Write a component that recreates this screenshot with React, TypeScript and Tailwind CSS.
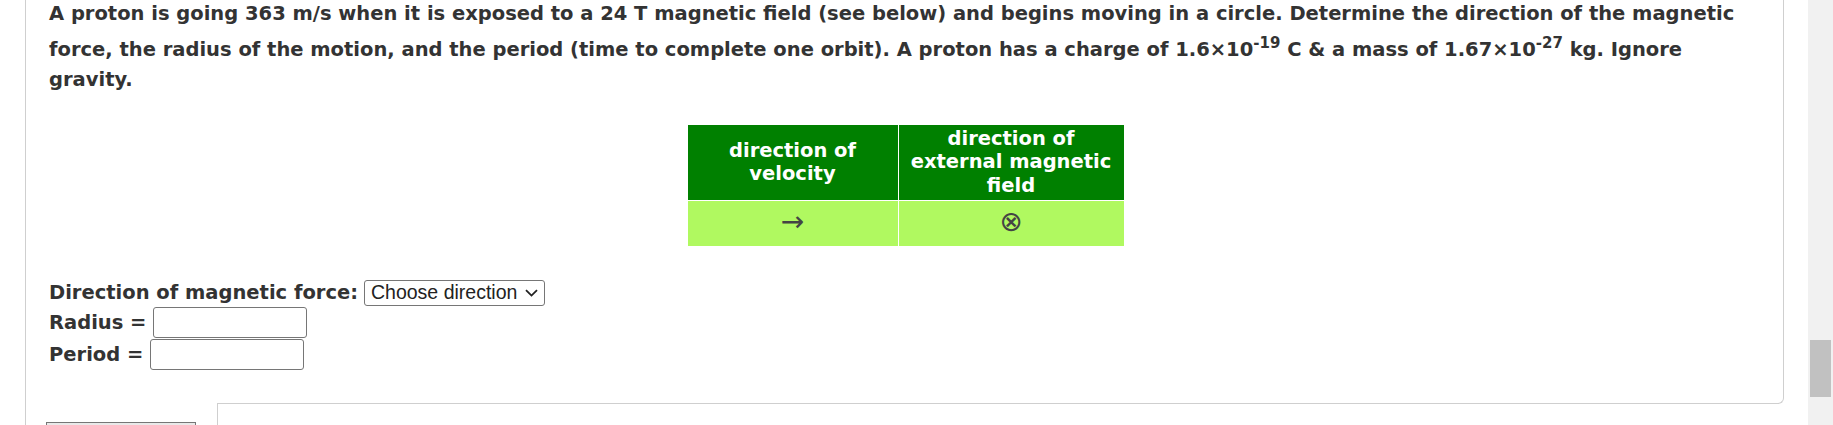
import React from "react";

function Sup({ children }: { children: React.ReactNode }) {
  return <span className="align-super text-[15px] leading-[28px]">{children}</span>;
}

function FieldTable() {
  return (
    <div className="mx-auto mt-[30px] grid w-[436px] grid-cols-[210px_225px] gap-px">
      <div className="flex h-[75px] items-center justify-center bg-[#008000] px-2 text-center text-[19.5px] font-bold leading-[23.5px] text-white">
        direction of velocity
      </div>
      <div className="flex h-[75px] items-center justify-center bg-[#008000] px-2 text-center text-[19.5px] font-bold leading-[23.5px] text-white">
        direction of external magnetic field
      </div>
      <div className="flex h-[45px] items-center justify-center bg-[#b0f960] pb-[2px] font-['DejaVu_Sans',sans-serif] text-[28px] leading-none text-[#444]">
        →
      </div>
      <div className="flex h-[45px] items-center justify-center bg-[#b0f960] pb-[2px] font-['DejaVu_Sans',sans-serif] text-[28px] leading-none text-[#444]">
        ⊗
      </div>
    </div>
  );
}

function AnswerForm() {
  return (
    <div className="mt-[33px] flex flex-col text-[19.5px] font-bold">
      <div className="flex h-[28px] items-center gap-[6px]">
        <span>Direction of magnetic force:</span>
        <div className="flex h-[26px] w-[181px] items-center justify-between rounded-[3px] border border-[#767676] px-[6px] font-['Liberation_Sans',Arial,sans-serif] text-[19.5px] font-normal text-[#222]">
          <span>Choose direction</span>
          <svg width="13" height="8" viewBox="0 0 13 8" fill="none" stroke="#222" strokeWidth="1.8">
            <path d="M1 1.2 L6.5 6.6 L12 1.2" />
          </svg>
        </div>
      </div>
      <div className="flex h-[32px] items-center gap-[7px]">
        <span>Radius =</span>
        <input type="text" className="h-[31px] w-[154px] rounded-[3px] border border-[#767676] bg-white" />
      </div>
      <div className="flex h-[32px] items-center gap-[7px]">
        <span>Period =</span>
        <input type="text" className="h-[31px] w-[154px] rounded-[3px] border border-[#767676] bg-white" />
      </div>
    </div>
  );
}

export default function App() {
  return (
    <div className="flex h-[425px] w-[1833px] overflow-hidden bg-white font-['DejaVu_Sans',Verdana,sans-serif] text-[#333]">
      <main className="flex-1 pl-[25px] pr-[24px]">
        <div className="border-l border-[#cfcfcf]">
          <section className="border-r border-[#cfcfcf] pb-[22px] pl-[23px] pr-[21px]">
            <p className="-mt-px text-[19.5px] font-bold leading-[30px]">
              A proton is going 363 m/s when it is exposed to a 24 T magnetic field (see below) and begins moving in a
              circle. Determine the direction of the magnetic force, the radius of the motion, and the period (time to
              complete one orbit). A proton has a charge of 1.6×10<Sup>-19</Sup> C &amp; a mass of 1.67×10<Sup>-27</Sup>{" "}
              kg. Ignore gravity.
            </p>
            <FieldTable />
            <AnswerForm />
          </section>
          <div className="flex">
            <div className="w-[191px]" />
            <div className="h-[11px] flex-1 rounded-br-[6px] border-r border-b border-[#cfcfcf]" />
          </div>
          <div className="flex">
            <div className="w-[191px] pl-[20px] pt-[18px]">
              <div className="h-[36px] w-[150px] border border-[#767676] bg-[#e9e9e9]" />
            </div>
            <div className="h-[40px] flex-1 border-l border-[#cfcfcf]" />
          </div>
        </div>
      </main>
      <div className="flex w-[25px] flex-col bg-[#f1f1f1] px-[2px] pt-[340px]">
        <div className="h-[57px] bg-[#c1c1c1]" />
      </div>
    </div>
  );
}
